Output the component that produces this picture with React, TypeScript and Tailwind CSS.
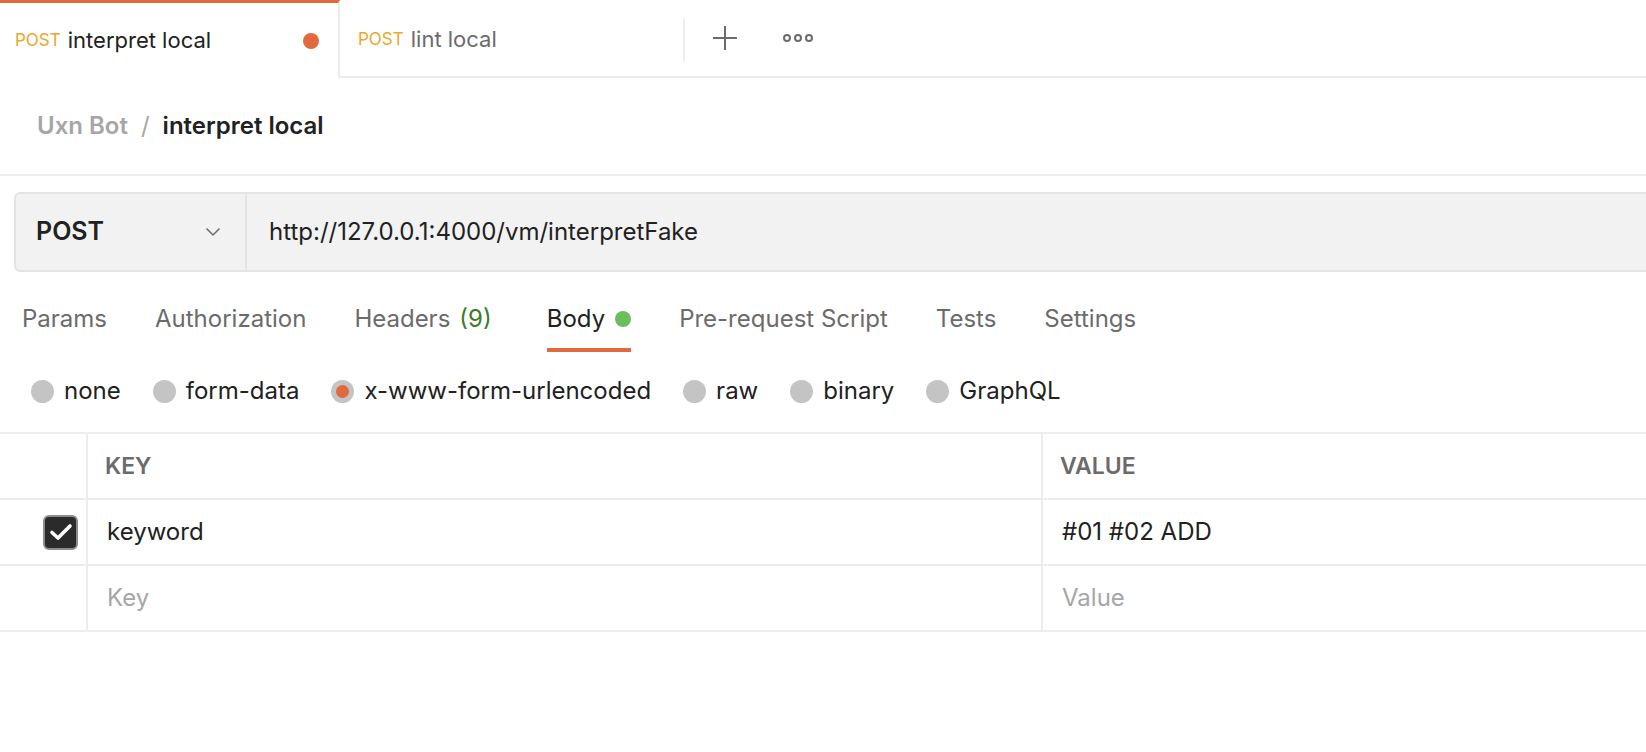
import React from "react";

const tabs = [
  { label: "Params" },
  { label: "Authorization" },
  { label: "Headers", count: "(9)" },
  { label: "Body", active: true },
  { label: "Pre-request Script" },
  { label: "Tests" },
  { label: "Settings" },
];

const bodyTypes = [
  { label: "none" },
  { label: "form-data" },
  { label: "x-www-form-urlencoded", checked: true },
  { label: "raw" },
  { label: "binary" },
  { label: "GraphQL" },
];

const App: React.FC = () => {
  return (
    <div className="h-screen w-full bg-white overflow-hidden font-['Inter',sans-serif] text-[#212121]">
      {/* request tabs */}
      <div className="flex h-[78px]">
        <div className="w-[340px] flex items-center pl-[15px] pr-[19px] border-t-[3px] border-[#e0693d] border-r-2 border-r-[#ececec]">
          <span className="text-[17px] text-[#eba72b]">POST</span>
          <span className="ml-[7px] text-[22px] text-[#212121]">interpret local</span>
          <span className="ml-auto w-4 h-4 rounded-full bg-[#e0693d]"></span>
        </div>
        <div className="flex-1 flex items-center border-b-2 border-[#ececec]">
          <div className="w-[345px] flex items-center pl-[18px] h-[42px] mt-[3px] border-r-2 border-[#ececec]">
            <span className="text-[17px] text-[#eba72b]">POST</span>
            <span className="ml-[7px] text-[22px] text-[#6b6b6b]">lint local</span>
          </div>
          <div className="ml-[28px] w-6 h-6 relative">
            <div className="absolute left-[11px] top-0 w-[2px] h-6 bg-[#6b6b6b]"></div>
            <div className="absolute top-[11px] left-0 h-[2px] w-6 bg-[#6b6b6b]"></div>
          </div>
          <div className="ml-[46px] flex gap-[3px]">
            <span className="w-[8px] h-[8px] rounded-full border-2 border-[#6b6b6b]"></span>
            <span className="w-[8px] h-[8px] rounded-full border-2 border-[#6b6b6b]"></span>
            <span className="w-[8px] h-[8px] rounded-full border-2 border-[#6b6b6b]"></span>
          </div>
        </div>
      </div>

      {/* breadcrumb */}
      <div className="h-[98px] flex items-center pl-[37px] border-b-2 border-[#ececec] text-[24px] font-semibold">
        <span className="text-[#a6a6a6]">Uxn Bot</span>
        <span className="mx-[13px] text-[#a6a6a6] font-normal">/</span>
        <span className="text-[#212121]">interpret local</span>
      </div>

      {/* url bar */}
      <div className="mt-4 ml-[14px] h-[80px] flex bg-[#f2f2f2] border-2 border-r-0 border-[#e4e4e4] rounded-l-md">
        <div className="w-[231px] flex items-center pl-[20px] pr-[24px] border-r-2 border-[#e4e4e4]">
          <span className="text-[25px] font-semibold text-[#212121]">POST</span>
          <svg className="ml-auto" width="16" height="10" viewBox="0 0 16 10" fill="none">
            <path d="M1.5 1.5L8 8L14.5 1.5" stroke="#6b6b6b" strokeWidth="1.5" />
          </svg>
        </div>
        <div className="flex items-center pl-[22px] text-[24px] text-[#212121]">
          http://127.0.0.1:4000/vm/interpretFake
        </div>
      </div>

      {/* request option tabs */}
      <div className="mt-[29px] flex gap-[48px] pl-[22px] text-[24px]">
        {tabs.map((t) => (
          <div
            key={t.label}
            className={
              t.active
                ? "flex items-center gap-[10px] pb-[11px] border-b-4 border-[#e0693d] text-[#212121]"
                : t.count
                ? "flex items-center gap-[10px] pb-[11px] mr-[7px] border-b-4 border-transparent text-[#6b6b6b]"
                : "flex items-center gap-[10px] pb-[11px] border-b-4 border-transparent text-[#6b6b6b]"
            }
          >
            <span>
              {t.label}
              {t.count && <span className="ml-[9px] text-[#3d7a2c]">{t.count}</span>}
            </span>
            {t.active && <span className="w-4 h-4 rounded-full bg-[#6cbd5d]"></span>}
          </div>
        ))}
      </div>

      {/* body types */}
      <div className="mt-[21px] flex items-center pl-[31px] gap-[32px] text-[24px] text-[#212121]">
        {bodyTypes.map((b) => (
          <div key={b.label} className="flex items-center gap-[10px]">
            <span className="w-[23px] h-[23px] rounded-full bg-[#c4c4c4] flex items-center justify-center">
              {b.checked && <span className="w-[13px] h-[13px] rounded-full bg-[#e0693d]"></span>}
            </span>
            <span>{b.label}</span>
          </div>
        ))}
      </div>

      {/* key value table */}
      <div className="mt-[23px] border-t-2 border-[#ececec]">
        <div className="grid grid-cols-[88px_955px_1fr] h-[66px] border-b-2 border-[#ececec] text-[23px] font-semibold text-[#6b6b6b]">
          <div className="border-r-2 border-[#ececec]"></div>
          <div className="flex items-center pl-[17px] border-r-2 border-[#ececec]">KEY</div>
          <div className="flex items-center pl-[17px]">VALUE</div>
        </div>
        <div className="grid grid-cols-[88px_955px_1fr] h-[66px] border-b-2 border-[#ececec] text-[24px]">
          <div className="flex items-center justify-end pr-[8px] border-r-2 border-[#ececec]">
            <span className="w-[35px] h-[35px] rounded-[6px] bg-[#2b2b2b] border-2 border-[#8c8c8c] flex items-center justify-center">
              <svg width="24" height="18" viewBox="0 0 24 18" fill="none">
                <path d="M3 9.5L9 15L21 3" stroke="#ffffff" strokeWidth="3.6" strokeLinecap="round" strokeLinejoin="round" />
              </svg>
            </span>
          </div>
          <div className="flex items-center pl-[19px] border-r-2 border-[#ececec]">keyword</div>
          <div className="flex items-center pl-[19px]">#01 #02 ADD</div>
        </div>
        <div className="grid grid-cols-[88px_955px_1fr] h-[66px] border-b-2 border-[#ececec] text-[24px] text-[#a6a6a6]">
          <div className="border-r-2 border-[#ececec]"></div>
          <div className="flex items-center pl-[19px] border-r-2 border-[#ececec]">Key</div>
          <div className="flex items-center pl-[19px]">Value</div>
        </div>
      </div>
    </div>
  );
};

export default App;
